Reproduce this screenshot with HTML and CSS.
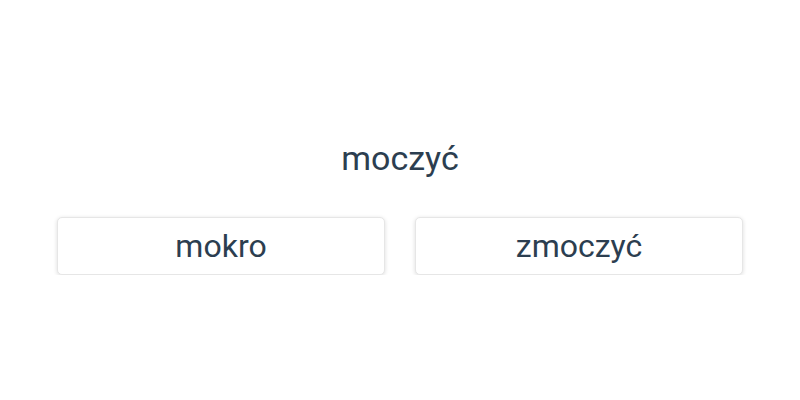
FILE: index.html
```html
<!DOCTYPE html>
<html>
	<head>
		<meta charset="utf-8">
		<title>moczyć</title>
		<link rel="stylesheet" href="styles.css">
	</head>
	<body>
		<main class="quiz">
			<div class="word">moczyć</div>
			<div class="answers">
				<button class="answer">mokro</button>
				<button class="answer">zmoczyć</button>
			</div>
		</main>
	</body>
</html>
```

FILE: styles.css
```css
* {
	margin: 0;
	padding: 0;
	box-sizing: border-box;
}
body {
	background: #fff;
	color: #2c3e50;
	font-family: Roboto, "Noto Sans", sans-serif;
}
.quiz {
	padding: 136px 57px 0;
}
.word {
	font-size: 34px;
	line-height: 44px;
	text-align: center;
}
.answers {
	display: flex;
	gap: 30px;
	margin-top: 37px;
}
.answer {
	flex: 1;
	height: 58px;
	background: #fff;
	border: 1px solid #e6e6e6;
	border-radius: 5px;
	box-shadow: 0 1px 4px rgba(0, 0, 0, 0.14);
	color: #2c3e50;
	font-family: inherit;
	font-size: 32px;
}
```
